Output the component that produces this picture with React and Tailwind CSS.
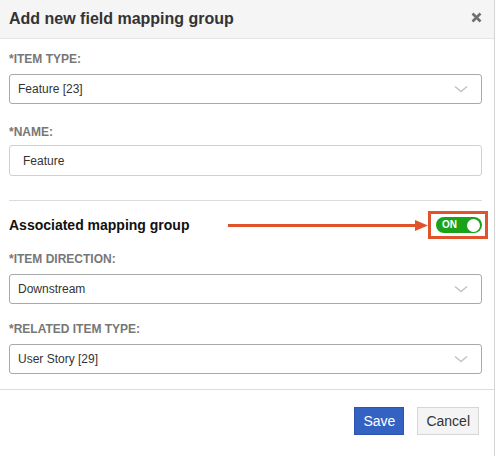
import React from "react";

function Chevron() {
  return (
    <svg className="w-[14px] h-[8px]" viewBox="0 0 14 8" fill="none" stroke="#c4c4c4" strokeWidth={1.6}>
      <path d="M1 1.5l6 5 6-5" />
    </svg>
  );
}

function SelectBox({ value }) {
  return (
    <div className="h-[30px] border border-[#a9a9a9] rounded-[3px] flex items-center justify-between pl-[8px] pr-[13px] text-[12px] text-[#333]">
      <span>{value}</span>
      <Chevron />
    </div>
  );
}

function Label({ children, className = "" }) {
  return (
    <div className={`text-[12px] leading-[14px] font-bold text-[#777] uppercase ${className}`}>{children}</div>
  );
}

export default function App() {
  return (
    <div className="w-[495px] h-[456px] bg-white border-r border-[#d4d4d4] flex flex-col" style={{ fontFamily: '"Liberation Sans", Arial, sans-serif' }}>
      {/* Header */}
      <div className="h-[39px] bg-[#f5f5f5] border-b border-[#e2e2e8] flex items-center justify-between pl-[9px] pr-[10px] shrink-0">
        <h1 className="text-[16px] font-bold text-[#333]">Add new field mapping group</h1>
        <svg className="w-[11px] h-[11px] mb-[3px] mr-[2px]" viewBox="0 0 11 11" stroke="#6f6f6f" strokeWidth={2.6}>
          <path d="M1.5 1.5l8 8M9.5 1.5l-8 8" />
        </svg>
      </div>

      {/* Body */}
      <div className="pl-[9px] pr-[12px] pt-[13px]">
        <Label>*Item type:</Label>
        <div className="mt-[8px]">
          <SelectBox value="Feature [23]" />
        </div>

        <Label className="mt-[21px]">*Name:</Label>
        <div className="mt-[6px] h-[31px] border border-[#d0d0d0] rounded-[3px] flex items-center pl-[13px] text-[12px] text-[#333]">
          Feature
        </div>

        <div className="mt-[24px] border-t border-[#dcdcdc]" />

        <div className="mt-[10px] flex items-center justify-between">
          <span className="text-[14px] font-bold text-[#111]">Associated mapping group</span>
          <div className="flex items-center mr-[-6px]">
            <div className="w-[188px] h-[3px] bg-[#e0532b]" />
            <svg className="w-[13px] h-[11px] ml-[-1px]" viewBox="0 0 13 11">
              <path d="M0 0L13 5.5L0 11z" fill="#e0532b" />
            </svg>
            <div className="border-[3px] border-[#e0532b] pl-[5px] pr-[3px] py-[3px]">
              <div className="w-[46px] h-[16px] rounded-full bg-[#1aa31a] flex items-center justify-between pl-[6px] pr-[2px]">
                <span className="text-[10px] font-bold text-white leading-none">ON</span>
                <span className="w-[13px] h-[13px] rounded-full bg-white" />
              </div>
            </div>
          </div>
        </div>

        <Label className="mt-[13px]">*Item direction:</Label>
        <div className="mt-[8px]">
          <SelectBox value="Downstream" />
        </div>

        <Label className="mt-[18px]">*Related item type:</Label>
        <div className="mt-[8px]">
          <SelectBox value="User Story [29]" />
        </div>
      </div>

      {/* Footer */}
      <div className="mt-[15px] border-t border-[#dcdcdc] flex justify-end gap-[13px] pt-[17px] pr-[15px]">
        <button className="h-[28px] px-[8px] bg-[#3462c2] border border-[#2c55ab] text-white text-[14px]">Save</button>
        <button className="h-[28px] px-[8px] bg-[#f4f4f4] border border-[#d6d6d6] text-[#333] text-[14px]">Cancel</button>
      </div>
    </div>
  );
}
